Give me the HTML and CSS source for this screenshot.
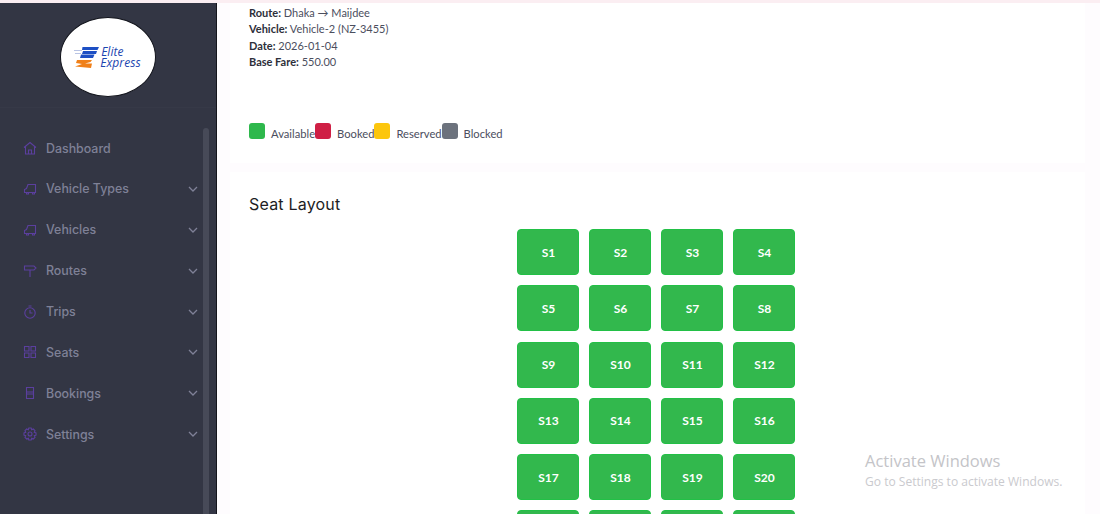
FILE: index.html
```html
<!DOCTYPE html>
<html lang="en">
<head>
    <meta charset="UTF-8">
    <meta name="viewport" content="width=device-width, initial-scale=1.0">
    <title>Seat Layout</title>
    <link rel="stylesheet" href="styles.css">
</head>
<body>

    <div class="dashboard-container">
        <!-- Sidebar -->
        <aside class="sidebar">
            <div class="logo-area">
                <div class="logo">
                    <svg class="logo-mark" viewBox="0 0 25 22" width="25" height="22">
                        <path d="M8.500 1H25L23.500 4H8Z" fill="#1d4fc4"/>
                        <path d="M9 5H23L22 8H8Z" fill="#1d4fc4"/>
                        <path d="M7 8.500H20.500L19 12H6Z" fill="#1d4fc4"/>
                        <path d="M0 4H8V5H0ZM1 7H7V8H1Z" fill="#b9c4e4"/>
                        <path d="M3 14H18L16.500 16L11 17.500H18L17 22L1 20.500L8 18L2 17Z" fill="#f08019"/>
                    </svg>
                    <div class="logo-text"><span class="logo-elite">Elite</span><span class="logo-express">Express</span></div>
                </div>
            </div>
            <nav class="menu">
                <a class="menu-item">
                    <svg class="menu-icon" viewBox="0 0 14 14"><path d="M1 6.500L7 1.500L13 6.500M2.500 5.500V13H11.500V5.500M5.500 13V9H8.500V13"/></svg>
                    <span>Dashboard</span>
                </a>
                <a class="menu-item">
                    <svg class="menu-icon" viewBox="0 0 14 14"><path d="M5 2.500H12.500V10.500H1.500V7.500L3.500 6.500ZM3.500 10.500V12H5.500V10.500M9.500 10.500V12H11.500V10.500"/></svg>
                    <span>Vehicle Types</span>
                    <svg class="chevron" viewBox="0 0 10 6"><path d="M1 1L5 5L9 1"/></svg>
                </a>
                <a class="menu-item">
                    <svg class="menu-icon" viewBox="0 0 14 14"><path d="M5 2.500H12.500V10.500H1.500V7.500L3.500 6.500ZM3.500 10.500V12H5.500V10.500M9.500 10.500V12H11.500V10.500"/></svg>
                    <span>Vehicles</span>
                    <svg class="chevron" viewBox="0 0 10 6"><path d="M1 1L5 5L9 1"/></svg>
                </a>
                <a class="menu-item">
                    <svg class="menu-icon" viewBox="0 0 14 14"><path d="M1.500 2H11L13 4L11 6H1.500ZM7 6V13"/></svg>
                    <span>Routes</span>
                    <svg class="chevron" viewBox="0 0 10 6"><path d="M1 1L5 5L9 1"/></svg>
                </a>
                <a class="menu-item">
                    <svg class="menu-icon" viewBox="0 0 14 14"><circle cx="7" cy="8" r="5.200"/><path d="M7 5V8H9.500M5.500 1H8.500"/></svg>
                    <span>Trips</span>
                    <svg class="chevron" viewBox="0 0 10 6"><path d="M1 1L5 5L9 1"/></svg>
                </a>
                <a class="menu-item">
                    <svg class="menu-icon" viewBox="0 0 14 14"><path d="M1.500 1.500H6V6H1.500ZM8 1.500H12.500V6H8ZM1.500 8H6V12.500H1.500ZM8 8H12.500V12.500H8Z"/></svg>
                    <span>Seats</span>
                    <svg class="chevron" viewBox="0 0 10 6"><path d="M1 1L5 5L9 1"/></svg>
                </a>
                <a class="menu-item">
                    <svg class="menu-icon" viewBox="0 0 14 14"><path d="M3.500 1.500H10.500V12.500H3.500ZM3.500 6H10.500M3.500 8H10.500"/></svg>
                    <span>Bookings</span>
                    <svg class="chevron" viewBox="0 0 10 6"><path d="M1 1L5 5L9 1"/></svg>
                </a>
                <a class="menu-item">
                    <svg class="menu-icon" viewBox="0 0 14 14"><circle cx="7" cy="7" r="2"/><path d="M5.800 1H8.200L8.700 2.700L10.300 2L12 3.700L11.300 5.300L13 5.800V8.200L11.300 8.700L12 10.300L10.300 12L8.700 11.300L8.200 13H5.800L5.300 11.300L3.700 12L2 10.300L2.700 8.700L1 8.200V5.800L2.700 5.300L2 3.700L3.700 2L5.300 2.700Z"/></svg>
                    <span>Settings</span>
                    <svg class="chevron" viewBox="0 0 10 6"><path d="M1 1L5 5L9 1"/></svg>
                </a>
            </nav>
            <div class="sidebar-scroll"></div>
        </aside>

        <!-- Main Content -->
        <main class="main-content">
            <section class="card trip-card">
                <p><strong>Route:</strong> Dhaka &rarr; Maijdee</p>
                <p><strong>Vehicle:</strong> Vehicle-2 (NZ-3455)</p>
                <p><strong>Date:</strong> 2026-01-04</p>
                <p><strong>Base Fare:</strong> 550.00</p>
                <div class="legend">
                    <span class="swatch available"></span><span class="legend-label">Available</span>
                    <span class="swatch booked"></span><span class="legend-label">Booked</span>
                    <span class="swatch reserved"></span><span class="legend-label">Reserved</span>
                    <span class="swatch blocked"></span><span class="legend-label">Blocked</span>
                </div>
            </section>

            <section class="card seat-card">
                <h2>Seat Layout</h2>
                <div class="seat-grid">
                    <button class="seat">S1</button>
                    <button class="seat">S2</button>
                    <button class="seat">S3</button>
                    <button class="seat">S4</button>
                    <button class="seat">S5</button>
                    <button class="seat">S6</button>
                    <button class="seat">S7</button>
                    <button class="seat">S8</button>
                    <button class="seat">S9</button>
                    <button class="seat">S10</button>
                    <button class="seat">S11</button>
                    <button class="seat">S12</button>
                    <button class="seat">S13</button>
                    <button class="seat">S14</button>
                    <button class="seat">S15</button>
                    <button class="seat">S16</button>
                    <button class="seat">S17</button>
                    <button class="seat">S18</button>
                    <button class="seat">S19</button>
                    <button class="seat">S20</button>
                    <button class="seat"></button>
                    <button class="seat"></button>
                    <button class="seat"></button>
                    <button class="seat"></button>
                </div>
            </section>
        </main>
    </div>

    <div class="watermark">
        <div class="watermark-title">Activate Windows</div>
        <div class="watermark-sub">Go to Settings to activate Windows.</div>
    </div>

</body>
</html>
```

FILE: styles.css
```css
/* Reset */
* {
    margin: 0;
    padding: 0;
    box-sizing: border-box;
}

html, body {
    height: 100%;
    overflow: hidden;
}

body {
    background-color: #fefcfe;
    font-family: "Lato", sans-serif;
    border-top: 3px solid #fbeef2;
}

/* Dashboard Layout */
.dashboard-container {
    display: flex;
    height: 511px;
    overflow: hidden;
}

/* Sidebar */
.sidebar {
    position: relative;
    width: 217px;
    flex-shrink: 0;
    background-color: #333644;
    border-right: 1px solid #14151c;
}

.logo-area {
    height: 105px;
    padding-top: 14px;
    display: flex;
    justify-content: center;
    border-bottom: 1px solid #363947;
}

.logo {
    width: 96px;
    height: 80px;
    margin-left: -1px;
    border-radius: 50%;
    background-color: white;
    border: 1px solid #10121a;
    display: flex;
    align-items: center;
    justify-content: center;
    gap: 1px;
}

.logo-text {
    display: flex;
    flex-direction: column;
    color: #1c46b0;
    font-family: "Open Sans", sans-serif;
    font-size: 12px;
    font-style: italic;
    line-height: 11.500px;
}

.logo-elite {
    margin-left: 1px;
}

.logo-express {
    letter-spacing: 0.1px;
}

.menu {
    display: flex;
    flex-direction: column;
    padding-top: 19.600px;
}

.menu-item {
    display: flex;
    align-items: center;
    height: 40.900px;
    padding-left: 23px;
    color: #7f8197;
    font-family: "Inter", sans-serif;
    font-size: 12.400px;
    font-weight: 500;
}

.menu-icon {
    width: 14px;
    height: 14px;
    margin-right: 9px;
    fill: none;
    stroke: #5b3f9e;
    stroke-width: 1.100;
    flex-shrink: 0;
}

.chevron {
    width: 10px;
    height: 6px;
    margin-left: auto;
    margin-right: 18px;
    fill: none;
    stroke: #7f8197;
    stroke-width: 1.300;
}

.sidebar-scroll {
    position: absolute;
    left: 203px;
    top: 125px;
    bottom: 0;
    width: 6px;
    border-radius: 3px 3px 0 0;
    background-color: #474a58;
}

/* Main Content */
.main-content {
    flex: 1;
    padding: 0 15px 0 13px;
    overflow: hidden;
}

.card {
    background-color: white;
    padding-left: 19px;
    padding-right: 22px;
}

.trip-card {
    height: 160px;
    padding-top: 2px;
    margin-bottom: 9px;
    color: #4b4e5e;
    font-size: 11px;
    line-height: 16.300px;
}

.trip-card strong {
    color: #2d2f3a;
}

/* Legend */
.legend {
    display: flex;
    align-items: flex-start;
    margin-top: 53px;
    font-size: 11.200px;
}

.swatch {
    width: 16px;
    height: 16px;
    border-radius: 3px;
    flex-shrink: 0;
}

.available { background-color: #2eb84c; }
.booked { background-color: #cf1f45; }
.reserved { background-color: #fcc60d; }
.blocked { background-color: #6c727d; }

.legend-label {
    margin-left: 6px;
    padding-top: 3px;
}

/* Seats */
.seat-card {
    padding-top: 22px;
    padding-bottom: 40px;
}

.seat-card h2 {
    color: #1d1d24;
    font-family: "Inter", sans-serif;
    font-size: 16px;
    font-weight: 400;
    letter-spacing: 0.2px;
    line-height: 20px;
    margin-bottom: 15px;
}

.seat-grid {
    display: grid;
    grid-template-columns: repeat(4, 62px);
    grid-auto-rows: 46px;
    gap: 10.250px 10px;
    justify-content: center;
}

.seat {
    background-color: #32b84d;
    border: 1px solid #22c046;
    border-radius: 4px;
    padding-left: 1px;
    color: white;
    font-family: "Lato", sans-serif;
    font-size: 12px;
    font-weight: 700;
}

/* Windows watermark */
.watermark {
    position: absolute;
    left: 865px;
    top: 451px;
    font-family: "Open Sans", sans-serif;
    pointer-events: none;
}

.watermark-title {
    color: #c4c4c8;
    font-size: 16.500px;
    line-height: 20px;
}

.watermark-sub {
    color: #cacace;
    font-size: 12.050px;
    line-height: 21px;
}
```
